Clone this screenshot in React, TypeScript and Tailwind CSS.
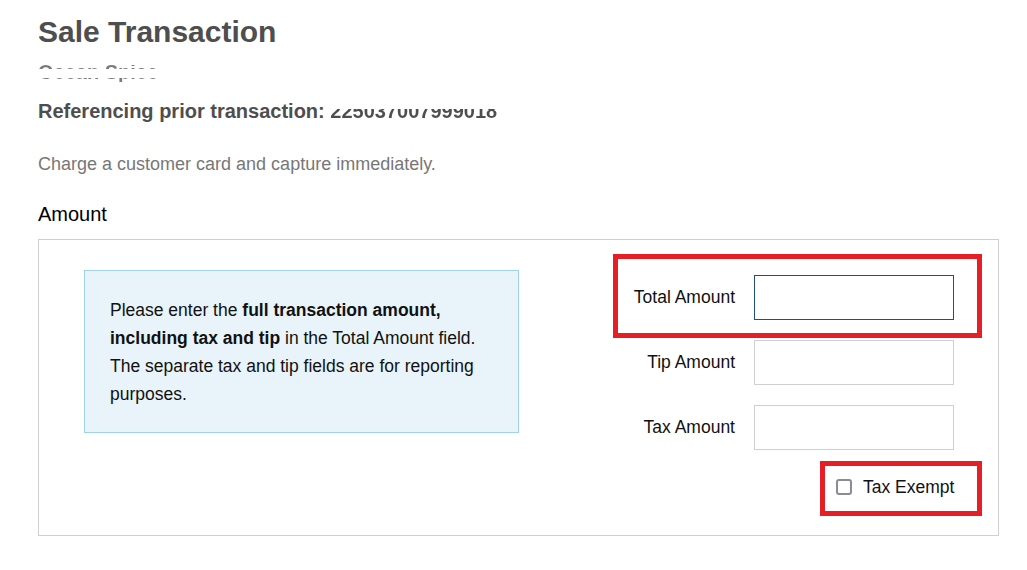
import React from "react";

const font = "font-['Liberation_Sans',Arial,Helvetica,sans-serif]";

function Field({
  label,
  focused = false,
}: {
  label: string;
  focused?: boolean;
}) {
  return (
    <div className="flex items-center justify-end gap-[19px]">
      <label className="pb-[2px] text-[17.5px] leading-[22px] text-[#111]">{label}</label>
      <input
        type="text"
        className={
          "h-[45px] w-[200px] bg-white outline-none " +
          (focused ? "border border-[#1f4f7f]" : "border border-[#cfcfcf]")
        }
      />
    </div>
  );
}

export default function App() {
  return (
    <div className={`${font} min-h-[570px] bg-white px-[38px] pt-[15px] pr-[28px]`}>
      <h1 className="text-[30px] font-bold leading-[34px] text-[#4e4e4e]">
        Sale Transaction
      </h1>

      {/* partially hidden merchant name */}
      <div className="mt-[11px] h-[24px]">
        <span className="bg-[linear-gradient(to_bottom,transparent_0px,transparent_4px,#7a7a7a_4px,#7a7a7a_8px,transparent_8px,transparent_17px,#7a7a7a_17px,#7a7a7a_21px,transparent_21px)] bg-clip-text text-[20px] font-bold leading-[24px] text-transparent">
          Ocean Spice
        </span>
      </div>

      <p className="mt-[15px] text-[20px] font-bold leading-[24px] text-[#4e4e4e]">
        Referencing prior transaction:{" "}
        <span className="bg-[linear-gradient(to_bottom,transparent_0px,transparent_9px,#4e4e4e_9px)] bg-clip-text text-transparent">
          225037007999018
        </span>
      </p>

      <p className="mt-[29px] text-[18px] leading-[24px] text-[#777]">
        Charge a customer card and capture immediately.
      </p>

      <h2 className="mt-[26px] text-[20px] leading-[24px] text-black">Amount</h2>

      <div className="mt-[13px] flex border border-[#cfcfcf]">
        <div className="ml-[45px] mt-[30px] h-[163px] w-[435px] border border-[#9fd3ea] bg-[#e8f4fa] pl-[25px] pr-[26px] pt-[25px] text-[17.5px] leading-[28px] text-[#111]">
          Please enter the <b>full transaction amount, including tax and tip</b> in
          the Total Amount field. The separate tax and tip fields are for reporting
          purposes.
        </div>

        <div className="ml-auto mr-[16px] flex flex-col items-end pb-[19px] pt-[14px]">
          <div className="w-[369px] border-[5px] border-[#e61e25] pb-[13px] pr-[23px] pt-[16px]">
            <Field label="Total Amount" focused />
          </div>
          <div className="mr-[28px] mt-[2px]">
            <Field label="Tip Amount" />
          </div>
          <div className="mr-[28px] mt-[20px]">
            <Field label="Tax Amount" />
          </div>
          <div className="mt-[11px] flex h-[55px] w-[162px] items-center border-[5px] border-[#e61e25] pb-[4px] pl-[11px]">
            <span className="h-[16px] w-[16px] rounded-[3px] border-2 border-[#8b8b97] bg-white" />
            <span className="ml-[11px] text-[17.5px] leading-[22px] text-[#111]">
              Tax Exempt
            </span>
          </div>
        </div>
      </div>
    </div>
  );
}
